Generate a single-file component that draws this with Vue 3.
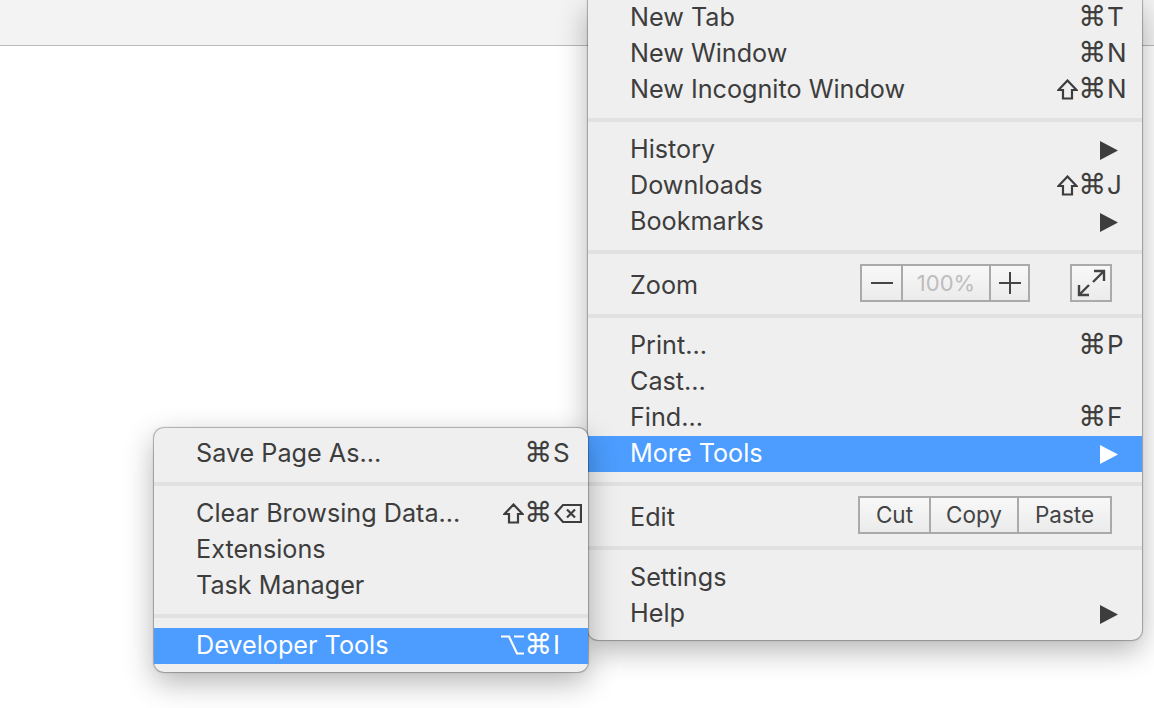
<script setup>
const mainItems = [
  { label: 'New Tab', keys: ['cmd'], letter: 'T' },
  { label: 'New Window', keys: ['cmd'], letter: 'N' },
  { label: 'New Incognito Window', keys: ['shift', 'cmd'], letter: 'N' },
  { type: 'sep' },
  { label: 'History', arrow: true },
  { label: 'Downloads', keys: ['shift', 'cmd'], letter: 'J' },
  { label: 'Bookmarks', arrow: true },
  { type: 'sep' },
  { type: 'zoom' },
  { type: 'sep', tall: true },
  { label: 'Print…', keys: ['cmd'], letter: 'P' },
  { label: 'Cast…' },
  { label: 'Find…', keys: ['cmd'], letter: 'F' },
  { label: 'More Tools', arrow: true, active: true },
  { type: 'sep' },
  { type: 'edit' },
  { type: 'sep', tall: true },
  { label: 'Settings' },
  { label: 'Help', arrow: true },
]
const subItems = [
  { label: 'Save Page As…', keys: ['cmd'], letter: 'S' },
  { type: 'sep' },
  { label: 'Clear Browsing Data…', keys: ['shift', 'cmd'], del: true },
  { label: 'Extensions' },
  { label: 'Task Manager' },
  { type: 'sep' },
  { label: 'Developer Tools', keys: ['opt', 'cmd'], letter: 'I', active: true },
]
const menus = [
  { name: 'main', items: mainItems },
  { name: 'sub', items: subItems },
]
</script>

<template>
  <div class="page">
    <header class="toolbar"></header>

    <div v-for="menu in menus" :key="menu.name" class="menu" :class="menu.name">
      <template v-for="(item, i) in menu.items" :key="i">
        <div v-if="item.type === 'sep'" class="sep" :class="{ tall: item.tall }"></div>

        <div v-else-if="item.type === 'zoom'" class="row tool">
          <span class="label">Zoom</span>
          <div class="btn-group zoom-group">
            <div class="btn minus"><svg width="22" height="22" viewBox="0 0 22 22"><path d="M0 11 H22" /></svg></div>
            <div class="btn pct">100%</div>
            <div class="btn plus"><svg width="22" height="22" viewBox="0 0 22 22"><path d="M0 11 H22 M11 0 V22" /></svg></div>
          </div>
          <div class="btn-group full">
            <div class="btn"><svg class="expand" width="38" height="34" viewBox="0 0 38 34"><path d="M22 5 H32 V15 M32 5 L21 16 M7 19 V29 H17 M7 29 L17 19" /></svg></div>
          </div>
        </div>

        <div v-else-if="item.type === 'edit'" class="row tool">
          <span class="label">Edit</span>
          <div class="btn-group edit-group">
            <div class="btn cut">Cut</div>
            <div class="btn copy">Copy</div>
            <div class="btn paste">Paste</div>
          </div>
        </div>

        <div v-else class="row" :class="{ active: item.active }">
          <span class="label">{{ item.label }}</span>
          <div v-if="item.keys" class="keys">
            <template v-for="k in item.keys" :key="k">
              <svg v-if="k === 'shift'" class="ksym" width="21" height="21" viewBox="0 0 21 21"><path d="M10.5 1.5 L19.5 11 H15 V19.5 H6 V11 H1.5 Z" /></svg>
              <svg v-else-if="k === 'opt'" class="ksym" width="23" height="20" viewBox="0 0 23 20"><path d="M0 1.5 H8 L16 18.5 H23 M13 1.5 H23" /></svg>
              <span v-else class="cmd">⌘</span>
            </template>
            <span class="letter">
              <svg v-if="item.del" class="ksym del" width="28" height="21" viewBox="0 0 28 21"><path d="M1.5 10.5 L9 2 H27 V19 H9 Z M13 6.5 L21 14.5 M21 6.5 L13 14.5" /></svg>
              <template v-else>{{ item.letter }}</template>
            </span>
          </div>
          <svg v-if="item.arrow" class="arrow" width="18" height="19" viewBox="0 0 18 19"><path d="M0 0 L18 9.5 L0 19 Z" /></svg>
        </div>
      </template>
    </div>
  </div>
</template>

<style>
html, body { margin: 0; background: #fff; }
</style>

<style scoped>
.page {
  position: relative;
  width: 1154px;
  height: 708px;
  overflow: hidden;
  background: #fff;
  font-family: Inter, "Liberation Sans", sans-serif;
}
.toolbar {
  height: 45px;
  background: #f3f3f3;
  border-bottom: 1px solid #b9b9b9;
}
.menu {
  position: absolute;
  box-sizing: border-box;
  background: #efefef;
  color: #3d3d3d;
  font-size: 25.2px;
  box-shadow: 0 0 1px 1px rgba(0, 0, 0, 0.28), 0 10px 30px rgba(0, 0, 0, 0.3);
}
.main {
  left: 588px;
  top: 0;
  width: 554px;
  height: 640px;
  border-radius: 0 0 10px 10px;
}
.sub {
  left: 154px;
  top: 428px;
  width: 434px;
  height: 244px;
  padding-top: 8px;
  border-radius: 10px;
}
.row {
  display: flex;
  align-items: center;
  box-sizing: border-box;
  height: 36px;
  padding: 0 0 2px 42px;
}
.row.active {
  background: #4c9dff;
  color: #fff;
}
.sep {
  box-sizing: border-box;
  height: 24px;
  padding: 10px 0;
}
.sep::before {
  content: "";
  display: block;
  height: 4px;
  background: #e1e1e1;
}
.sep.tall {
  height: 26px;
  padding-top: 12px;
}
.label { white-space: nowrap; }
.keys {
  display: flex;
  align-items: center;
  gap: 4px;
  margin-left: auto;
}
.cmd {
  width: 21px;
  display: flex;
  justify-content: center;
  font-family: "DejaVu Sans", sans-serif;
  font-size: 28px;
  line-height: 1;
}
.ksym {
  flex: none;
  fill: none;
  stroke: currentColor;
  stroke-width: 2.2;
}
.del { display: block; margin-left: 1px; }
.letter {
  display: block;
  width: 35px;
  font-size: 26px;
  line-height: 1;
}
.arrow {
  flex: none;
  margin: 3px 24px 0 auto;
  fill: #3d3d3d;
}
.active .arrow { fill: #fff; }
.tool {
  height: 38px;
  padding-bottom: 0;
}
.tool .label { margin-top: 4px; }
.btn-group {
  display: flex;
  box-sizing: border-box;
  height: 38px;
  border: 2px solid #aaa;
  background: linear-gradient(#f8f8f8, #ebebeb);
  font-size: 22.5px;
  color: #444;
}
.zoom-group { margin-left: auto; width: 170px; }
.full { margin: 0 30px 0 40px; width: 42px; }
.edit-group { margin: 0 30px 0 auto; width: 254px; }
.btn {
  display: flex;
  align-items: center;
  justify-content: center;
  box-sizing: border-box;
  flex: 1;
  line-height: 1;
}
.btn + .btn { border-left: 2px solid #aaa; }
.btn svg { fill: none; stroke: #444; stroke-width: 2; }
.btn .expand { stroke-width: 2.4; }
.minus { flex: none; width: 39px; }
.pct { flex: none; width: 88px; color: #bdbdbd; font-size: 22px; }
.plus { flex: 1; }
.cut { flex: none; width: 69px; }
.copy { flex: none; width: 88px; }
.paste { flex: 1; }
</style>
